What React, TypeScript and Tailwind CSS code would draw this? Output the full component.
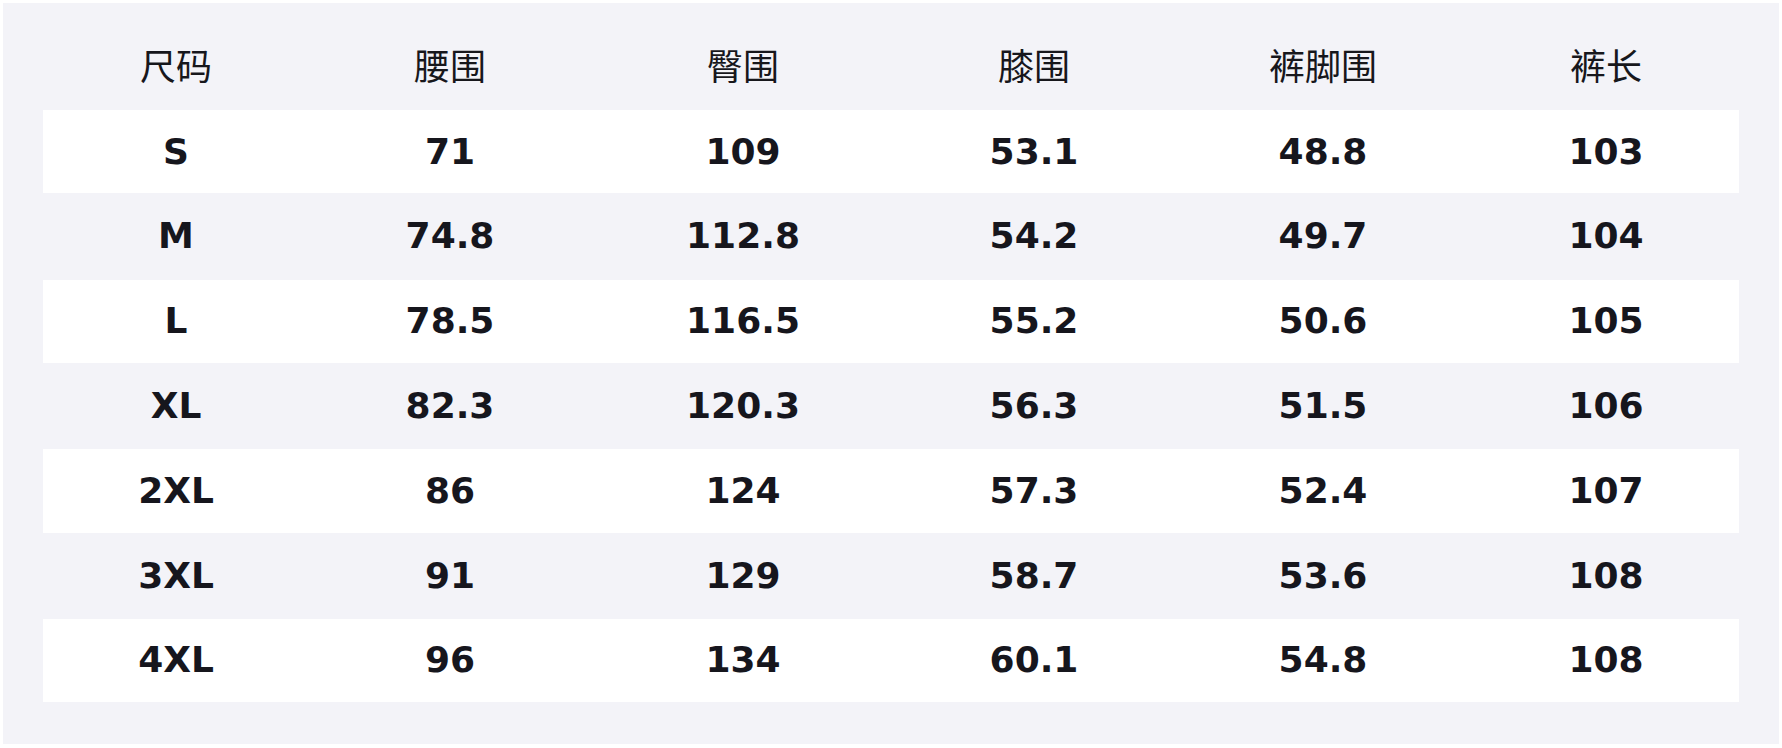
const headers = ["尺码", "腰围", "臀围", "膝围", "裤脚围", "裤长"];

const rows = [
  ["S", "71", "109", "53.1", "48.8", "103"],
  ["M", "74.8", "112.8", "54.2", "49.7", "104"],
  ["L", "78.5", "116.5", "55.2", "50.6", "105"],
  ["XL", "82.3", "120.3", "56.3", "51.5", "106"],
  ["2XL", "86", "124", "57.3", "52.4", "107"],
  ["3XL", "91", "129", "58.7", "53.6", "108"],
  ["4XL", "96", "134", "60.1", "54.8", "108"],
];

const cols = "grid grid-cols-[266px_282px_304px_278px_300px_266px]";

export default function App() {
  return (
    <div className="w-[1782px] h-[748px] bg-white p-[3px]">
      <div className="h-[741px] bg-[#f3f3f8] px-[40px] pt-[20px] pb-[40px]">
        {/* header row */}
        <div className={`${cols} h-[87px] pb-[6px] items-center text-[36px] text-[#17171c] font-['Noto_Sans_CJK_SC','Noto_Sans',sans-serif]`}>
          {headers.map((h) => (
            <div key={h} className="text-center leading-none">
              {h}
            </div>
          ))}
        </div>
        {rows.map((r, i) => (
          <div
            key={r[0]}
            className={`${cols} items-center text-[36px] font-bold text-[#16161d] font-['DejaVu_Sans',sans-serif] ${
              i % 2 === 0 ? "bg-white h-[83.4px]" : "h-[86.2px]"
            }`}
          >
            {r.map((v, j) => (
              <div key={j} className="text-center leading-none">
                {v}
              </div>
            ))}
          </div>
        ))}
      </div>
    </div>
  );
}
